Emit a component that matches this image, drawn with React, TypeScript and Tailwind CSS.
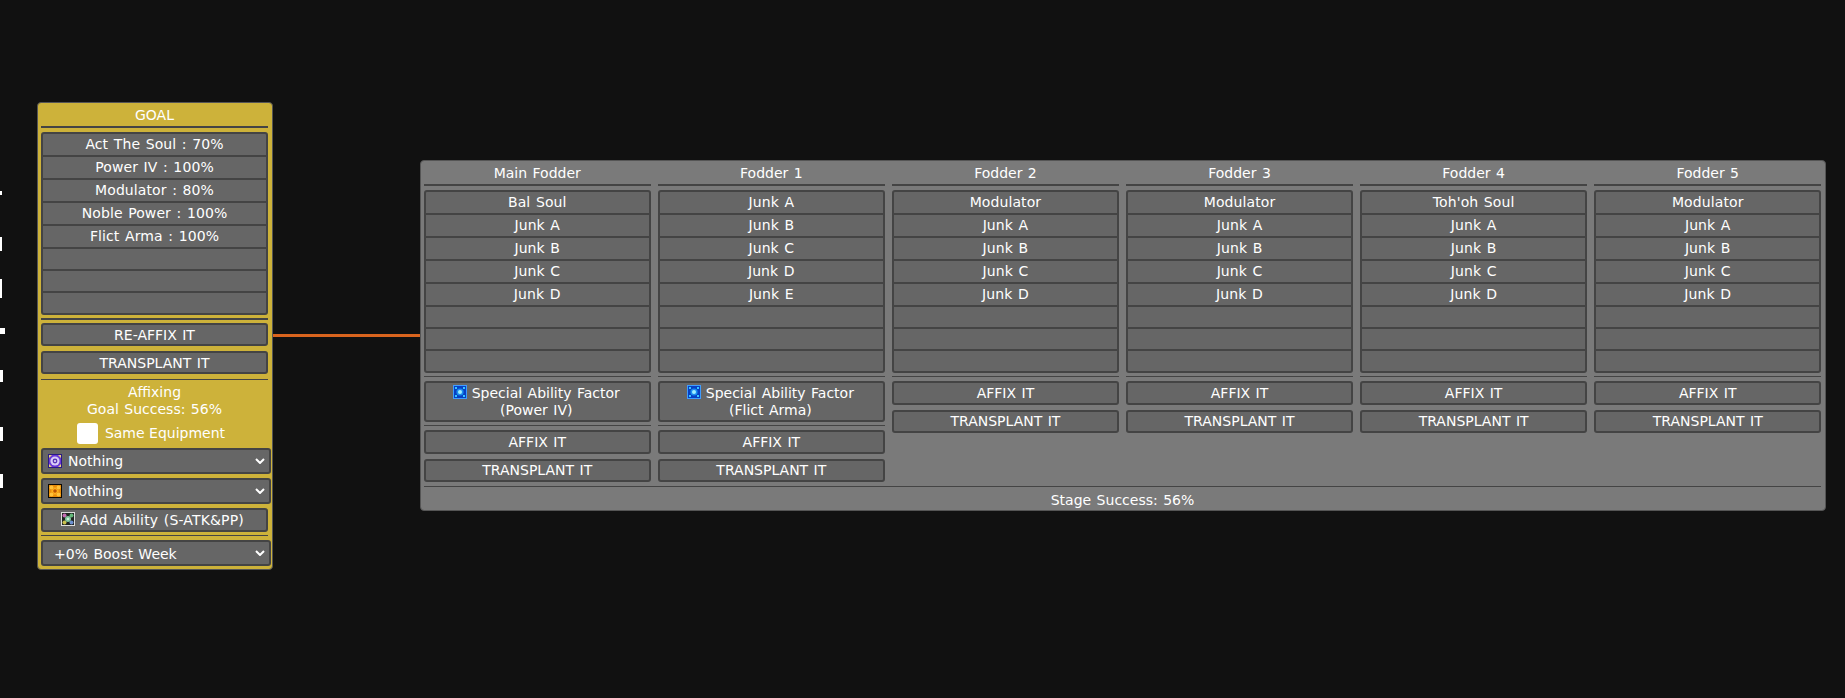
const Ico = ({ kind, cls = "" }: { kind: string; cls?: string }) => {
  const base = `inline-block shrink-0 ${cls}`;
  if (kind === "purple")
    return (
      <svg width="14" height="14" viewBox="0 0 14 14" className={base}>
        <rect width="14" height="14" fill="#2b1a86" />
        <rect x="1" y="1" width="12" height="12" fill="#6a38d8" />
        <path d="M1 1h3L1 4zM13 1v3l-3-3zM1 13v-3l3 3zM13 13h-3l3-3z" fill="#e6d27a" />
        <circle cx="7" cy="7" r="4.6" fill="#d9ccf8" />
        <circle cx="7" cy="7" r="2.4" fill="#5a35b8" />
        <circle cx="7" cy="7" r="1" fill="#efe8ff" />
      </svg>
    );
  if (kind === "orange")
    return (
      <svg width="14" height="14" viewBox="0 0 14 14" className={base}>
        <rect width="14" height="14" fill="#0d0a04" />
        <rect x="1" y="1" width="12" height="12" fill="#e88c0a" />
        <circle cx="3.5" cy="3.5" r="2" fill="#ffc23a" />
        <circle cx="10.5" cy="3.5" r="2" fill="#ffc23a" />
        <circle cx="3.5" cy="10.5" r="2" fill="#ffc23a" />
        <circle cx="10.5" cy="10.5" r="2" fill="#ffc23a" />
        <path d="M7 3l4 4-4 4-4-4z" fill="#ffb01e" />
        <circle cx="7" cy="7" r="1.8" fill="#b85204" />
      </svg>
    );
  if (kind === "gray")
    return (
      <svg width="14" height="14" viewBox="0 0 14 14" className={base}>
        <rect width="14" height="14" fill="#ddd" />
        <rect x="1" y="1" width="12" height="12" fill="#1f2522" />
        <circle cx="3.5" cy="3.5" r="2" fill="#c56cb4" />
        <circle cx="10.5" cy="3.5" r="2" fill="#63b878" />
        <circle cx="3.5" cy="10.5" r="2" fill="#c9c04e" />
        <circle cx="10.5" cy="10.5" r="2" fill="#6c8fd0" />
        <circle cx="7" cy="7" r="3" fill="#7fc49a" />
        <circle cx="7" cy="7" r="1.3" fill="#c8f0d8" />
      </svg>
    );
  return (
    <svg width="14" height="14" viewBox="0 0 14 14" className={base}>
      <rect width="14" height="14" fill="#3f9cff" />
      <rect x="1" y="1" width="12" height="12" fill="#0640c4" />
      <rect x="2" y="2" width="2" height="2" fill="#35c8ff" />
      <rect x="10" y="2" width="2" height="2" fill="#35c8ff" />
      <rect x="2" y="10" width="2" height="2" fill="#35c8ff" />
      <rect x="10" y="10" width="2" height="2" fill="#35c8ff" />
      <circle cx="7" cy="7" r="3.6" fill="#1a8cf0" />
      <circle cx="7" cy="7" r="2" fill="#9ff0ff" />
    </svg>
  );
};

const Btn = ({ children, cls = "h-[23.5px]" }: { children: React.ReactNode; cls?: string }) => (
  <div className={`${cls} rounded-[3px] border-2 border-[#444] bg-[#666] text-white flex items-center justify-center text-center pt-px`}>{children}</div>
);

const Rule = ({ cls = "" }: { cls?: string }) => <div className={`bg-[#444] shrink-0 ${cls}`} />;

const List = ({ items }: { items: string[] }) => {
  const all = [...items, ...Array(8 - items.length).fill("")];
  return (
    <div className="h-[183px] shrink-0 rounded-[3px] border-2 border-[#444] bg-[#444] flex flex-col gap-0.5 overflow-hidden">
      {all.map((t, i) => (
        <div key={i} className="flex-1 bg-[#666] text-white flex items-center justify-center tracking-[0.1px]">{t}</div>
      ))}
    </div>
  );
};

const Sel = ({ icon, label, cls = "h-[25.5px]" }: { icon?: string; label: string; cls?: string }) => (
  <div className={`relative ${cls} -mr-[3px] rounded-[3px] border-2 border-[#444] bg-[#666] text-white flex items-center`}>
    {icon ? (
      <span className="pl-[5px] flex items-center gap-[6px]"><Ico kind={icon} /><span className="pt-0.5">{label}</span></span>
    ) : (
      <span className="pl-[11px] pt-0.5">{label}</span>
    )}
    <svg width="10" height="6" viewBox="0 0 10 6" className="absolute right-[4px] top-2">
      <path d="M1 1 L5 5 L9 1" fill="none" stroke="#fff" strokeWidth="2" />
    </svg>
  </div>
);

const cols = [
  { h: "Main Fodder", items: ["Bal Soul", "Junk A", "Junk B", "Junk C", "Junk D"], f: "Power IV" },
  { h: "Fodder 1", items: ["Junk A", "Junk B", "Junk C", "Junk D", "Junk E"], f: "Flict Arma" },
  { h: "Fodder 2", items: ["Modulator", "Junk A", "Junk B", "Junk C", "Junk D"] },
  { h: "Fodder 3", items: ["Modulator", "Junk A", "Junk B", "Junk C", "Junk D"] },
  { h: "Fodder 4", items: ["Toh'oh Soul", "Junk A", "Junk B", "Junk C", "Junk D"] },
  { h: "Fodder 5", items: ["Modulator", "Junk A", "Junk B", "Junk C", "Junk D"] },
];

const specks = [
  "top-[191px] h-[4px] w-[2px]",
  "top-[237px] h-[14px] w-[2px]",
  "top-[279px] h-[19px] w-[2px]",
  "top-[328px] h-[6px] w-[5px]",
  "top-[370px] h-[12px] w-[3px]",
  "top-[427px] h-[14px] w-[3px]",
  "top-[474px] h-[14px] w-[3px]",
];

export default function App() {
  return (
    <div className="relative min-h-[698px] bg-[#111] text-[14px] [word-spacing:1px] flex items-start pl-[37px] pt-[102px]" style={{ fontFamily: '"DejaVu Sans", sans-serif' }}>
      {specks.map((s) => (
        <span key={s} className={`absolute left-0 bg-white ${s}`} />
      ))}
      <div className="w-[236px] h-[468px] shrink-0 rounded-[4px] border border-[#555] bg-[#cdb23a] pl-[3px] pr-1 text-white flex flex-col">
        <div className="h-[23px] flex items-center justify-center shrink-0 pt-px">GOAL</div>
        <Rule cls="h-0.5 mb-1" />
        <List items={["Act The Soul : 70%", "Power IV : 100%", "Modulator : 80%", "Noble Power : 100%", "Flict Arma : 100%"]} />
        <Rule cls="h-0.5 mt-[3px] mb-[3px]" />
        <div className="flex flex-col gap-[5px]">
          <Btn cls="h-[23px]">RE-AFFIX IT</Btn>
          <Btn cls="h-[23px]">TRANSPLANT IT</Btn>
        </div>
        <Rule cls="h-px mt-[5px]" />
        <div className="text-center leading-[17px] mt-1">Affixing<br />Goal Success: 56%</div>
        <div className="flex items-center justify-center gap-[7px] h-[21px] mt-[5px] pr-[7px]">
          <span className="w-[21px] h-[21px] rounded-[3px] bg-white" />
          <span className="[word-spacing:0px]">Same Equipment</span>
        </div>
        <div className="flex flex-col gap-[4.5px] mt-1">
          <Sel icon="purple" label="Nothing" />
          <Sel icon="orange" label="Nothing" />
          <Btn cls="h-6 gap-[5px] pr-[4px]"><Ico kind="gray" cls="-mt-[3px]" /><span className="tracking-[0.15px]">Add Ability (S-ATK&amp;PP)</span></Btn>
        </div>
        <Rule cls="h-px mt-[3px] mb-1" />
        <Sel label="+0% Boost Week" cls="h-[26px]" />
      </div>
      <div className="w-[147px] h-[3px] bg-[#d9641e] mt-[232px] shrink-0" />
      <div className="w-[1406px] h-[351px] mt-[58px] shrink-0 rounded-[4px] border border-[#555] bg-[#7a7a7a] pl-[3px] pr-1 text-white flex flex-col">
        <div className="flex gap-[7.6px] flex-1">
          {cols.map((c) => (
            <div key={c.h} className="flex-1 flex flex-col">
              <div className="h-[23px] flex items-center justify-center shrink-0 pt-px">{c.h}</div>
              <Rule cls="h-0.5 mb-1" />
              <List items={c.items} />
              <Rule cls="h-px mt-[3px] mb-1" />
              {c.f && (
                <>
                  <Btn cls="h-[41px]">
                    <div className="leading-[17px] pr-[2px]">
                      <Ico kind="blue" cls="align-[-1px] mr-[5px]" />
                      Special Ability Factor<br />({c.f})
                    </div>
                  </Btn>
                  <Rule cls="h-px mt-[3px] mb-1" />
                </>
              )}
              <div className="flex flex-col gap-[5px]">
                <Btn>AFFIX IT</Btn>
                <Btn>TRANSPLANT IT</Btn>
              </div>
            </div>
          ))}
        </div>
        <Rule cls="h-px" />
        <div className="h-[23px] flex items-center justify-center shrink-0 pt-[3px]">Stage Success: 56%</div>
      </div>
    </div>
  );
}
